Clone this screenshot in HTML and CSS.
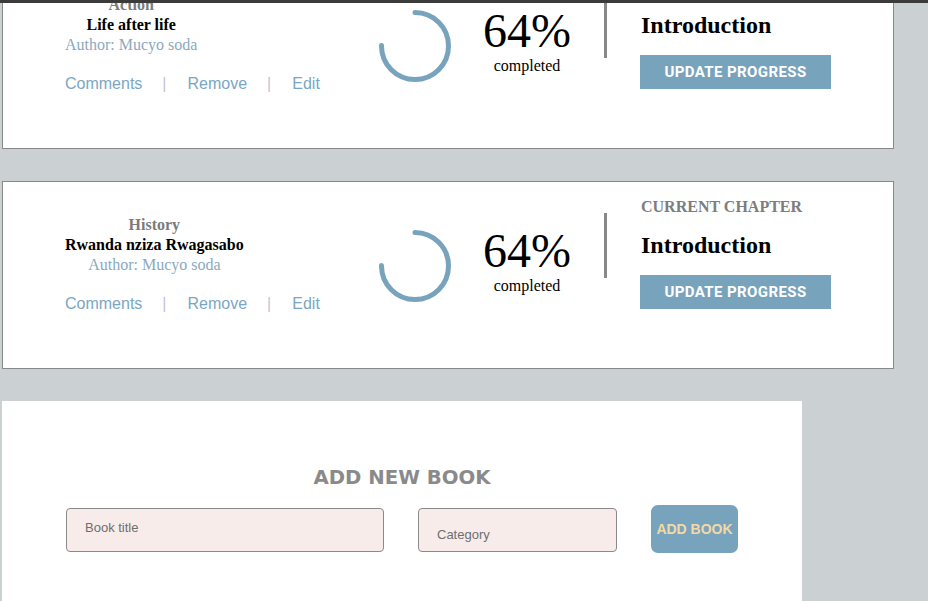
FILE: index.html
```html
<!DOCTYPE html>
<html lang="en">
<head>
<meta charset="utf-8">
<title>Books</title>
<link rel="stylesheet" href="styles.css">
</head>
<body>
<div class="topbar"></div>
<main class="page">
  <section class="card">
    <div class="info">
      <div class="meta">
        <div class="category">Action</div>
        <div class="title">Life after life</div>
        <div class="author">Author: Mucyo soda</div>
      </div>
      <div class="links">
        <a class="link">Comments</a><span class="sep">|</span><a class="link">Remove</a><span class="sep">|</span><a class="link">Edit</a>
      </div>
    </div>
    <svg class="ring" width="72" height="72" viewBox="0 0 72 72">
      <circle cx="36" cy="36" r="33.5" fill="none" stroke="#78a3bc" stroke-width="5" stroke-linecap="round" stroke-dasharray="158 211" transform="rotate(-90 36 36)"/>
    </svg>
    <div class="percent">
      <div class="value">64%</div>
      <div class="done">completed</div>
    </div>
    <div class="divider"></div>
    <div class="chapter">
      <div class="chapter-label">CURRENT CHAPTER</div>
      <div class="chapter-name">Introduction</div>
      <button class="update">UPDATE PROGRESS</button>
    </div>
  </section>

  <section class="card">
    <div class="info">
      <div class="meta">
        <div class="category">History</div>
        <div class="title">Rwanda nziza Rwagasabo</div>
        <div class="author">Author: Mucyo soda</div>
      </div>
      <div class="links">
        <a class="link">Comments</a><span class="sep">|</span><a class="link">Remove</a><span class="sep">|</span><a class="link">Edit</a>
      </div>
    </div>
    <svg class="ring" width="72" height="72" viewBox="0 0 72 72">
      <circle cx="36" cy="36" r="33.5" fill="none" stroke="#78a3bc" stroke-width="5" stroke-linecap="round" stroke-dasharray="158 211" transform="rotate(-90 36 36)"/>
    </svg>
    <div class="percent">
      <div class="value">64%</div>
      <div class="done">completed</div>
    </div>
    <div class="divider"></div>
    <div class="chapter">
      <div class="chapter-label">CURRENT CHAPTER</div>
      <div class="chapter-name">Introduction</div>
      <button class="update">UPDATE PROGRESS</button>
    </div>
  </section>

  <section class="add">
    <h2 class="add-title">ADD NEW BOOK</h2>
    <form class="add-form">
      <input class="field field-title" type="text" placeholder="Book title">
      <input class="field field-cat" type="text" placeholder="Category">
      <button class="add-btn" type="button">ADD BOOK</button>
    </form>
  </section>
</main>
</body>
</html>
```

FILE: styles.css
```css
html, body {
  margin: 0;
  padding: 0;
}

body {
  background: #cbd0d3;
  font-family: "Liberation Serif", "Times New Roman", serif;
  overflow: hidden;
}

.topbar {
  position: fixed;
  top: 0;
  left: 0;
  right: 0;
  height: 3px;
  background: #3b3b3b;
  z-index: 10;
}

/* page is shown scrolled down a little */
.page {
  margin-top: -39px;
  padding-left: 2px;
  display: flex;
  flex-direction: column;
  align-items: flex-start;
  gap: 32px;
}

.card {
  box-sizing: border-box;
  width: 892px;
  height: 188px;
  background: #fff;
  border: 1px solid #888;
  display: flex;
  align-items: flex-start;
}

.info {
  box-sizing: border-box;
  width: 376px;
  padding: 33px 0 0 62px;
  flex: none;
}

.meta {
  width: fit-content;
  text-align: center;
  font-size: 16px;
  line-height: 20px;
}

.category {
  font-weight: bold;
  color: #7b7b7b;
}

.title {
  font-weight: bold;
  color: #000;
}

.author {
  color: #8aa9c0;
}

.links {
  margin-top: 20px;
  display: flex;
  align-items: center;
  font-family: "Liberation Sans", Arial, sans-serif;
  font-size: 16px;
  line-height: 18px;
}

.link {
  color: #7aa6c4;
  cursor: pointer;
}

.sep {
  color: #c4bfdb;
  margin: 0 21px 0 20px;
}

.ring {
  flex: none;
  margin-top: 48px;
}

.percent {
  width: 100px;
  margin: 45px 0 0 26px;
  text-align: center;
  color: #000;
}

.value {
  font-size: 48px;
  line-height: 48px;
}

.done {
  font-size: 16px;
  line-height: 20px;
  margin-top: 1px;
}

.divider {
  width: 3px;
  height: 65px;
  background: #888;
  margin: 31px 0 0 27px;
  flex: none;
}

.chapter {
  margin: 15px 0 0 33px;
  display: flex;
  flex-direction: column;
  align-items: flex-start;
}

.chapter-label {
  font-size: 16px;
  line-height: 20px;
  font-weight: bold;
  color: #7d7d7d;
  padding-left: 1px;
}

.chapter-name {
  font-size: 24px;
  line-height: 28px;
  font-weight: bold;
  color: #000;
  margin-top: 14px;
  padding-left: 1px;
}

.update {
  margin-top: 16px;
  width: 191px;
  height: 34px;
  border: none;
  background: #78a3bc;
  color: #fff;
  font-family: Roboto, "Liberation Sans", sans-serif;
  font-weight: bold;
  font-size: 15px;
  letter-spacing: 0.4px;
  padding: 0;
  cursor: pointer;
}

.add {
  box-sizing: border-box;
  width: 800px;
  height: 260px;
  background: #fff;
  padding: 65px 64px 0;
}

.add-title {
  margin: 0;
  text-align: center;
  font-family: "DejaVu Sans", sans-serif;
  font-weight: bold;
  font-size: 19.7px;
  line-height: 24px;
  color: #8a8a8a;
}

.add-form {
  margin: 15px 0 0;
  height: 48px;
  display: flex;
  align-items: center;
  justify-content: space-between;
}

.field {
  box-sizing: border-box;
  height: 44px;
  margin-top: 2px;
  border: 1px solid #8a8a8a;
  border-radius: 4px;
  background: #f8ecea;
  font-family: "Liberation Sans", Arial, sans-serif;
  font-size: 13px;
  color: #444;
  outline: none;
}

.field::placeholder {
  color: #6e6e6e;
  opacity: 1;
}

.field-title {
  width: 318px;
  padding: 0 18px 6px;
}

.field-cat {
  width: 199px;
  padding: 8px 18px 0;
}

.add-btn {
  width: 87px;
  height: 48px;
  border: none;
  border-radius: 7px;
  background: #78a3bc;
  color: #f3d9a6;
  font-family: "Liberation Sans", Arial, sans-serif;
  font-weight: bold;
  font-size: 14px;
  padding: 0;
  cursor: pointer;
}
```
